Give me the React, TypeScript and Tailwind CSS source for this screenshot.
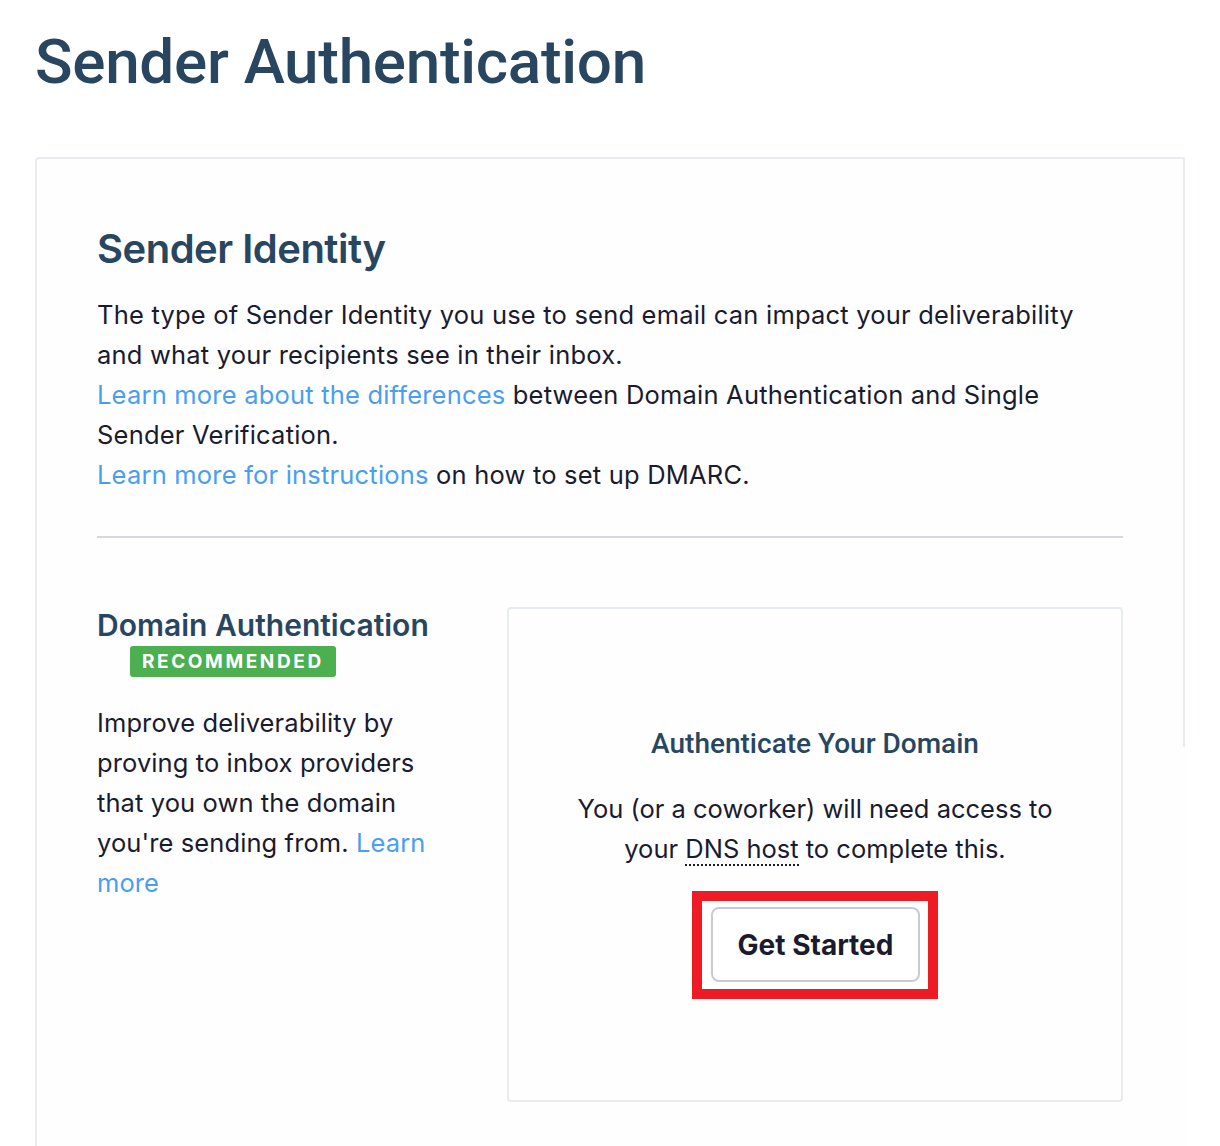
import React from "react";

export default function App() {
  return (
    <div className="min-h-[1146px] bg-white pl-[35px] pr-[35px]" style={{ fontFamily: "Inter, 'Noto Sans', sans-serif" }}>
      <h1
        className="pt-[26px] text-[62px] font-medium leading-[72px] tracking-[-0.3px] text-[#294661]"
        style={{ fontFamily: "Roboto, 'Liberation Sans', sans-serif" }}
      >
        Sender Authentication
      </h1>
      <div className="relative mt-[59px] h-[1000px] rounded-t-[4px] border-l-2 border-t-2 border-[#e8ebef] bg-[#fefefe] px-[60px] pt-[66px]">
        <span className="absolute right-0 top-[-2px] h-[590px] w-[2px] rounded-tr-[4px] bg-[#e8ebef]" />
        <h2 className="text-[40px] font-semibold leading-[48px] tracking-[-0.5px] text-[#294661]">Sender Identity</h2>
        <p className="mt-[22px] text-[25.5px] leading-[40px] tracking-[0.2px] text-[#1a1b2e]">
          The type of Sender Identity you use to send email can impact your deliverability and what your recipients see in their inbox.
          <br />
          <span className="text-[#4a9ef0]">Learn more about the differences</span> between Domain Authentication and Single Sender Verification.
          <br />
          <span className="text-[#4a9ef0]">Learn more for instructions</span> on how to set up DMARC.
        </p>
        <div className="mr-[2px] mt-[41px] h-[2px] bg-[#d5d9de]" />
        <div className="mt-[69px] flex gap-[68px]">
          <div className="w-[342px] shrink-0">
            <h3 className="text-[30px] font-semibold leading-[36px] text-[#294661]">Domain Authentication</h3>
            <span className="ml-[33px] mt-[3px] inline-block rounded-[3px] bg-[#4caf50] px-[12px] text-[19px] font-bold leading-[31px] tracking-[2.6px] text-white">
              RECOMMENDED
            </span>
            <p className="mt-[26px] text-[25.5px] leading-[40px] tracking-[0.1px] text-[#1a1b2e]">
              Improve deliverability by proving to inbox providers that you own the domain you're sending from. <span className="text-[#4a9ef0]">Learn more</span>
            </p>
          </div>
          <div className="mr-[2px] flex h-[495px] flex-1 flex-col items-center rounded-[4px] border-2 border-[#e8ebef] pt-[119px] text-center">
            <h4
              className="text-[28px] font-medium leading-[32px] text-[#294661]"
              style={{ fontFamily: "Roboto, 'Liberation Sans', sans-serif" }}
            >
              Authenticate Your Domain
            </h4>
            <p className="mt-[29px] text-[25.5px] leading-[40px] tracking-[0px] text-[#1a1b2e]">
              You (or a coworker) will need access to
              <br />
              your <span className="border-b-2 border-dotted border-[#1a1b2e] leading-[28px]">DNS host</span> to complete this.
            </p>
            <div className="mt-[22px] border-[10px] border-[#ed1c24] pb-[7px] pl-[9px] pr-[8px] pt-[6px]">
              <button className="h-[75px] w-[209px] rounded-[8px] border-2 border-[#c9cad8] bg-white text-[28px] font-bold text-[#1a1b2e]">
                Get Started
              </button>
            </div>
          </div>
        </div>
      </div>
    </div>
  );
}
